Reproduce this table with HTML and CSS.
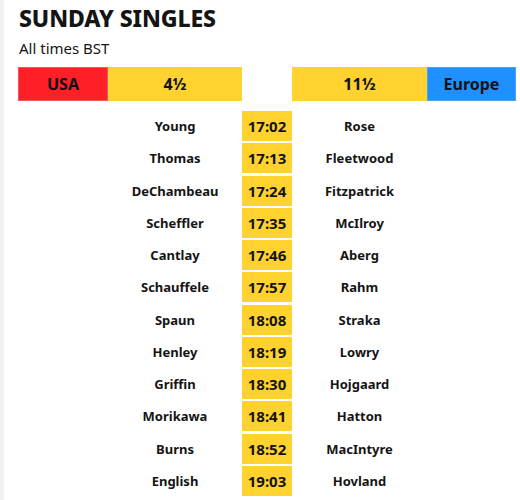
FILE: index.html
```html
<!DOCTYPE html>
<html>
<head>
<meta charset="utf-8">
<link rel="stylesheet" href="styles.css">
</head>
<body>
<div class="page">
  <h1 class="title">SUNDAY SINGLES</h1>
  <p class="sub">All times BST</p>
  <div class="score">
    <div class="team usa">USA</div>
    <div class="pts">4½</div>
    <div class="spacer"></div>
    <div class="pts">11½</div>
    <div class="team eur">Europe</div>
  </div>
  <div class="matches">
    <div class="row"><span class="p">Young</span><span class="t">17:02</span><span class="p">Rose</span></div>
    <div class="row"><span class="p">Thomas</span><span class="t">17:13</span><span class="p">Fleetwood</span></div>
    <div class="row"><span class="p">DeChambeau</span><span class="t">17:24</span><span class="p">Fitzpatrick</span></div>
    <div class="row"><span class="p">Scheffler</span><span class="t">17:35</span><span class="p">McIlroy</span></div>
    <div class="row"><span class="p">Cantlay</span><span class="t">17:46</span><span class="p">Aberg</span></div>
    <div class="row"><span class="p">Schauffele</span><span class="t">17:57</span><span class="p">Rahm</span></div>
    <div class="row"><span class="p">Spaun</span><span class="t">18:08</span><span class="p">Straka</span></div>
    <div class="row"><span class="p">Henley</span><span class="t">18:19</span><span class="p">Lowry</span></div>
    <div class="row"><span class="p">Griffin</span><span class="t">18:30</span><span class="p">Hojgaard</span></div>
    <div class="row"><span class="p">Morikawa</span><span class="t">18:41</span><span class="p">Hatton</span></div>
    <div class="row"><span class="p">Burns</span><span class="t">18:52</span><span class="p">MacIntyre</span></div>
    <div class="row"><span class="p">English</span><span class="t">19:03</span><span class="p">Hovland</span></div>
  </div>
</div>
</body>
</html>
```
FILE: styles.css
```css
html, body {
  margin: 0;
  padding: 0;
  background: #fff;
}
body {
  font-family: "Noto Sans", "Open Sans", sans-serif;
  color: #141414;
  border-left: 4px solid #f2f2f2;
  min-height: 500px;
  box-sizing: border-box;
}
.page {
  padding: 6px 4px 0 14px;
}
.title {
  margin: 0;
  font-size: 23px;
  line-height: 24px;
  font-weight: 800;
  letter-spacing: -0.1px;
  padding-left: 1px;
}
.sub {
  margin: 8px 0 0 1px;
  font-size: 15px;
  line-height: 20px;
}
.score {
  margin-top: 9px;
  display: grid;
  grid-template-columns: 90px 134px 50px 135px 89px;
  height: 34px;
}
.score > div {
  display: flex;
  align-items: center;
  justify-content: center;
  font-weight: 700;
  font-size: 16px;
  box-sizing: border-box;
}
.usa {
  background: #ff1f26;
  border: 1px solid #f0565a;
  color: #111;
}
.pts {
  background: #ffd230;
}
.spacer {
  background: transparent;
}
.eur {
  background: #1e90ff;
  border: 1px solid #4aa2f4;
}
.matches {
  margin-top: 10px;
  display: flex;
  flex-direction: column;
  gap: 2.27px;
}
.row {
  display: grid;
  grid-template-columns: 90px 134px 50px 135px 89px;
  height: 30px;
  align-items: stretch;
}
.row .p {
  display: flex;
  align-items: center;
  justify-content: center;
  font-weight: 700;
  font-size: 13px;
}
.row .p:first-child {
  grid-column: 2;
}
.row .t {
  grid-column: 3;
  background: #ffd230;
  display: flex;
  align-items: center;
  justify-content: center;
  font-weight: 700;
  font-size: 15px;
}
.row .t + .p {
  grid-column: 4;
}
```
